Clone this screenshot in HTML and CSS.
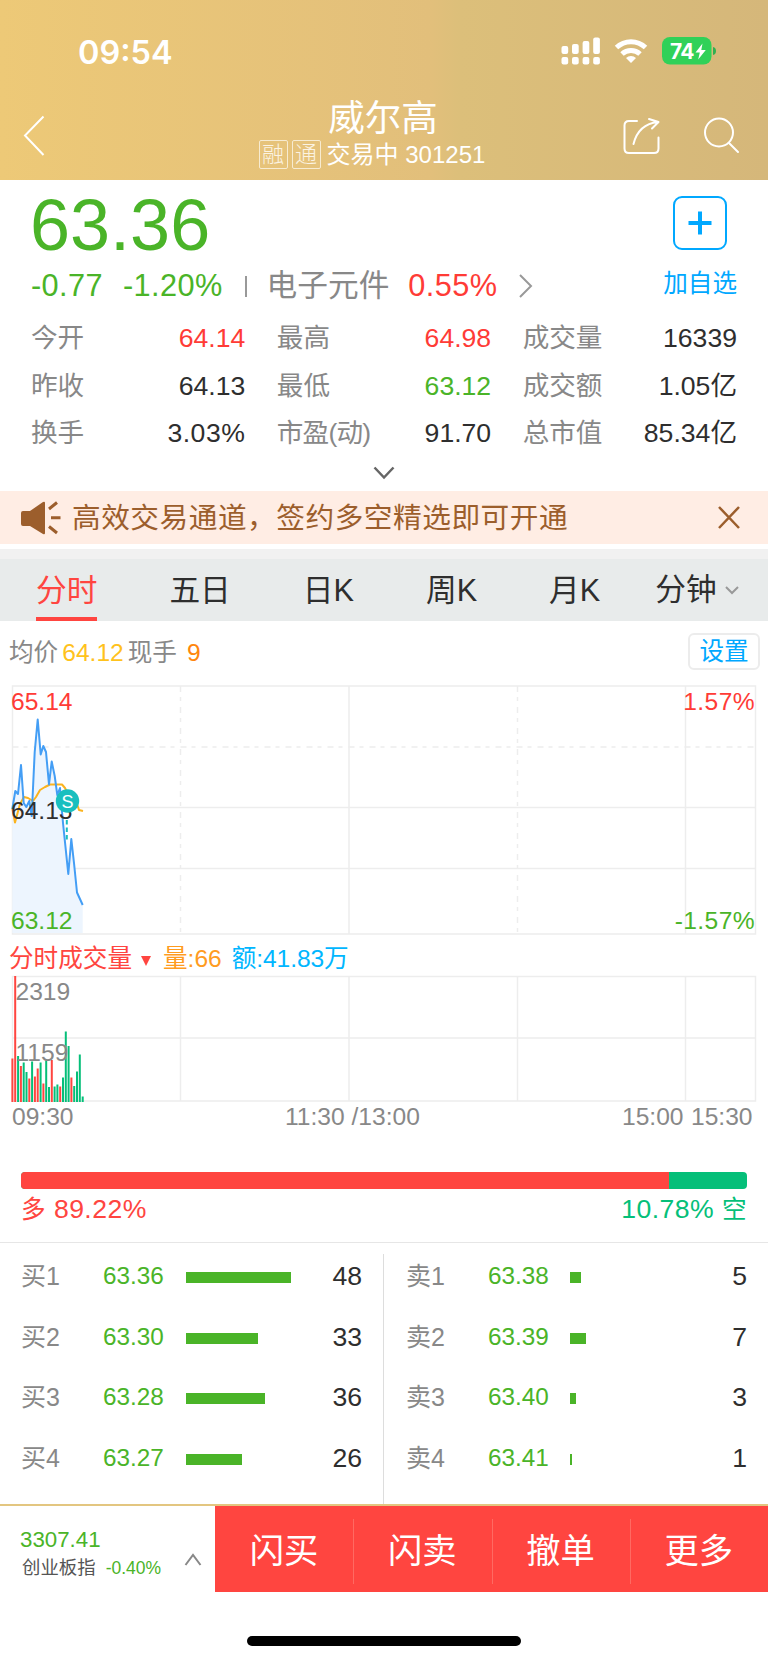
FILE: index.html
```html
<!DOCTYPE html>
<html lang="zh-CN">
<head>
    <meta charset="utf-8">
    <title>威尔高 301251</title>
    <link rel="stylesheet" href="styles.css">
</head>
<body>
    <header class="header">
        <div class="status">
            <span class="time">09:54</span>
            <svg class="status-icons" width="156" height="30" viewBox="561 36 156 30" fill="#fff">
                <rect x="561.5" y="46" width="6.7" height="8" rx="2"/>
                <rect x="572" y="44" width="6.7" height="10" rx="2"/>
                <rect x="582.6" y="41" width="6.7" height="13" rx="2"/>
                <rect x="593.2" y="37.5" width="6.7" height="16.5" rx="2"/>
                <rect x="561.5" y="57" width="6.7" height="7.5" rx="2"/>
                <rect x="572" y="57" width="6.7" height="7.5" rx="2"/>
                <rect x="582.6" y="57" width="6.7" height="7.5" rx="2"/>
                <rect x="593.2" y="57" width="6.7" height="7.5" rx="2"/>
                <g fill="none" stroke="#fff" stroke-width="5">
                    <path d="M616.5 47.5a21 21 0 0 1 29 0"/>
                    <path d="M622 54a13.2 13.2 0 0 1 18 0"/>
                </g>
                <path d="M631 63l-5-5a7.4 7.4 0 0 1 10 0z"/>
                <rect x="662" y="37" width="49.5" height="27.5" rx="8" fill="#30d158"/>
                <path d="M713 47q3 .5 3 4t-3 4z" fill="#30b050"/>
                <text class="battery" x="670" y="58.5">74</text>
                <path d="M702.5 43.5l-7 9h4.3l-1.6 7 7.6-9.4h-4.5z"/>
            </svg>
        </div>
        <div class="nav">
            <svg width="23" height="42" viewBox="23 115 23 42" fill="none" stroke="#fff" stroke-width="2"><path d="M43.5 116.5L25 135.5l18.5 19.5"/></svg>
            <div class="title">
                <h1>威尔高</h1>
                <p><i>融</i><i>通</i><span>交易中 301251</span></p>
            </div>
            <svg width="118" height="38" viewBox="622 117 118 38" fill="none" stroke="#fff" stroke-width="2" stroke-linecap="round" stroke-linejoin="round">
                <path d="M637 121h-8q-4.500 0-4.500 4.500v23q0 4.500 4.500 4.500h25q4.500 0 4.500-4.500v-11"/>
                <path d="M633.500 144q5-20 24.500-22M649 119l9.500 3-6.500 6.500"/>
                <circle cx="719" cy="132.500" r="14"/>
                <path d="M729 143l9 9"/>
            </svg>
        </div>
    </header>

    <section class="quote">
        <div class="price-row">
            <span class="price">63.36</span>
            <button class="add"><svg width="24" height="24" stroke="#00a8ff" stroke-width="4"><path d="M0.500 12h23M12 0.500v23"/></svg></button>
        </div>
        <div class="change">
            <span class="down">-0.77</span>
            <span class="down pct">-1.20%</span>
            <b></b>
            <span class="sector">电子元件</span>
            <span class="up">0.55%</span>
            <svg width="14" height="24" fill="none" stroke="#999" stroke-width="2"><path d="M1 1l11 11L1 23"/></svg>
            <a class="add-text">加自选</a>
        </div>
        <dl class="stats">
            <div><dt>今开</dt><dd class="up">64.14</dd></div>
            <div><dt>最高</dt><dd class="up">64.98</dd></div>
            <div><dt>成交量</dt><dd>16339</dd></div>
            <div><dt>昨收</dt><dd>64.13</dd></div>
            <div><dt>最低</dt><dd class="down">63.12</dd></div>
            <div><dt>成交额</dt><dd>1.05亿</dd></div>
            <div><dt>换手</dt><dd class="wide">3.03%</dd></div>
            <div><dt class="tight">市盈(动)</dt><dd>91.70</dd></div>
            <div><dt>总市值</dt><dd>85.34亿</dd></div>
        </dl>
        <svg class="expand" width="22" height="14" fill="none" stroke="#666" stroke-width="2.500"><path d="M1.500 1.500l9.500 10 9.500-10"/></svg>
    </section>

    <div class="notice">
        <svg width="40" height="34" viewBox="21 501 40 34" fill="#9c5e2c">
            <path d="M21 513q0-2 2-2h7l13-9q2-1 2 1v30q0 2-2 1l-13-8h-7q-2 0-2-2z"/>
            <path d="M49 509l8-6.500M51 517.700h9.500M49 526.500l8 6.500" stroke="#9c5e2c" stroke-width="3"/>
        </svg>
        <p>高效交易通道，签约多空精选即可开通</p>
        <svg width="22" height="23" stroke="#9c5e2c" stroke-width="2.500"><path d="M1 1l20 21M21 1L1 22"/></svg>
    </div>

    <nav class="tabs">
        <a class="active">分时</a>
        <a>五日</a>
        <a>日K</a>
        <a>周K</a>
        <a>月K</a>
        <a class="minute">分钟<svg width="14" height="9" fill="none" stroke="#999" stroke-width="2"><path d="M1 1l6 6 6-6"/></svg></a>
    </nav>

    <div class="info">
        <span>均价</span><span class="avg">64.12</span><span>现手</span><span class="hand">9</span>
        <button>设置</button>
    </div>

    <svg class="chart" width="768" height="252" viewBox="0 684 768 252">
        <g class="grid">
            <path d="M12.500 686H755.500V934H12.500zM12.500 807.500H755.500M12.500 868.500H755.500M349 686V934M685.500 686V934"/>
            <path d="M12.500 747H755.500M180.500 686V934M517.500 686V934" stroke-dasharray="6 5 4 6"/>
        </g>
        <path fill="#edf5fe" d="M12.300 809L15.300 791 18 794 21 765 23.700 803 26.300 807 29.300 801 31.700 816 34.700 752 37.700 719.500 40.700 754.500 43.300 746 46 752 49 784.500 51.700 761.500 54.700 776 57.300 795 60 788 63 823 68.300 874 71.300 839 74 863 77 892.500 82.700 905V933H12.300z"/>
        <path class="line avg-line" d="M12.300 808L15 822.500 20 804 24 797 28 798 33 801 36 797 40 790 45 787 50 784.500 62 784.500 65 788 70 798 76 801 79 810 83 811"/>
        <path class="line price-line" d="M12.300 809L15.300 791 18 794 21 765 23.700 803 26.300 807 29.300 801 31.700 816 34.700 752 37.700 719.500 40.700 754.500 43.300 746 46 752 49 784.500 51.700 761.500 54.700 776 57.300 795 60 788 63 823 68.300 874 71.300 839 74 863 77 892.500 82.700 905"/>
        <text x="11" y="709.500" class="t-up">65.14</text>
        <text x="11" y="819" class="t-dark">64.13</text>
        <text x="11" y="929" class="t-down">63.12</text>
        <text x="755" y="709.500" class="t-up end">1.57%</text>
        <text x="755" y="929" class="t-down end">-1.57%</text>
        <path d="M66.800 820v20" stroke="#19bfbf" stroke-width="2" stroke-dasharray="4.500 3"/>
        <circle cx="67.500" cy="801" r="11.700" fill="#19bfbf"/>
        <text x="67.500" y="807.500" class="mark">S</text>
    </svg>

    <div class="vol-head">
        <span class="name">分时成交量</span><span class="tri"></span><span class="vol">量:66</span><span class="amt">额:41.83万</span>
    </div>

    <svg class="chart" width="768" height="158" viewBox="0 975 768 158">
        <g class="grid">
            <path d="M12.500 976.500H755.500V1101H12.500zM12.500 1038H755.500M180.500 976.500V1101M349 976.500V1101M517.500 976.500V1101M685.500 976.500V1101"/>
        </g>
        <g class="bars-up">
            <path d="M12.400 1102V1058.500M15.200 1102V976M20.900 1102V1066M29.300 1102V1078.500M34.900 1102V1076.500M37.700 1102V1068.500M43.400 1102V1083.500M51.800 1102V1060M60.200 1102V1086.500M71.400 1102V1077.500"/>
        </g>
        <g class="bars-down">
            <path d="M18.100 1102V1056M23.700 1102V1062.500M26.500 1102V1072M32.100 1102V1061.500M40.600 1102V1062.500M46.200 1102V1060.500M49 1102V1087M54.600 1102V1086.500M57.400 1102V1084.500M63 1102V1077.500M65.800 1102V1031.500M68.600 1102V1046M74.200 1102V1086M77 1102V1071.500M79.800 1102V1054.500M82.700 1102V1096.500"/>
        </g>
        <g class="t-gray">
            <text x="15.500" y="1000">2319</text>
            <text x="15.500" y="1061">1159</text>
            <text x="12" y="1125">09:30</text>
            <text x="285" y="1125">11:30</text>
            <text x="351.500" y="1125">/13:00</text>
            <text x="622" y="1125">15:00</text>
            <text x="691" y="1125">15:30</text>
        </g>
    </svg>

    <section class="ratio">
        <div class="ratio-bar"><div style="width: 89.22%"></div></div>
        <div class="ratio-text"><span class="long"><em>多</em> 89.22%</span><span class="short">10.78% <em>空</em></span></div>
    </section>

    <section class="book">
        <ul>
            <li><span class="lv">买1</span><span class="p">63.36</span><span class="bar" style="width: 105px"></span><span class="n">48</span></li>
            <li><span class="lv">买2</span><span class="p">63.30</span><span class="bar" style="width: 72px"></span><span class="n">33</span></li>
            <li><span class="lv">买3</span><span class="p">63.28</span><span class="bar" style="width: 79px"></span><span class="n">36</span></li>
            <li><span class="lv">买4</span><span class="p">63.27</span><span class="bar" style="width: 56px"></span><span class="n">26</span></li>
        </ul>
        <ul>
            <li><span class="lv">卖1</span><span class="p">63.38</span><span class="bar" style="width: 11px"></span><span class="n">5</span></li>
            <li><span class="lv">卖2</span><span class="p">63.39</span><span class="bar" style="width: 16px"></span><span class="n">7</span></li>
            <li><span class="lv">卖3</span><span class="p">63.40</span><span class="bar" style="width: 6px"></span><span class="n">3</span></li>
            <li><span class="lv">卖4</span><span class="p">63.41</span><span class="bar" style="width: 2px"></span><span class="n">1</span></li>
        </ul>
    </section>

    <footer class="footer">
        <div class="index">
            <div>
                <div class="index-value">3307.41</div>
                <div class="index-name">创业板指 <span>-0.40%</span></div>
            </div>
            <svg width="18" height="13" fill="none" stroke="#888" stroke-width="2"><path d="M1.500 12L9 2l7.500 10"/></svg>
        </div>
        <a>闪买</a>
        <a>闪卖</a>
        <a>撤单</a>
        <a>更多</a>
    </footer>
    <div class="home"></div>
</body>
</html>
```
FILE: styles.css
```css
* {
    box-sizing: border-box;
    margin: 0;
    padding: 0;
}

body {
    width: 768px;
    height: 1663px;
    overflow: hidden;
    background: #fff;
    color: #2e2e2e;
    font-family: "Liberation Sans", "Noto Sans CJK SC", sans-serif;
    font-size: 24.6px;
}

svg {
    display: block;
    flex: none;
}

button {
    background: none;
    font: inherit;
}

.up { color: #ff3b36; }
.down { color: #4ab428; }

/* header */
.header {
    height: 180px;
    background: linear-gradient(90deg, #edc977, #e2bf7b 56%, #dcbf7a 60%, #d5b77a);
    color: #fff;
}

.status {
    display: flex;
    justify-content: space-between;
    height: 96px;
    padding: 36px 51px 0 78px;
}

.time {
    font: 600 32.5px/33px Inter, sans-serif;
}

.battery {
    font: 700 21px Inter, sans-serif;
    letter-spacing: -.8px;
}

.nav {
    display: grid;
    grid-template-columns: 118px 1fr 118px;
    height: 84px;
    padding: 0 28px 0 23px;
}

.nav > svg {
    margin-top: 19px;
}

.nav > svg:last-child {
    margin-top: 21px;
}

.title h1 {
    margin-top: 3px;
    padding-left: 3px;
    font-size: 36.5px;
    font-weight: 400;
    line-height: 40px;
    text-align: center;
}

.title p {
    display: flex;
    justify-content: center;
    padding-right: 19px;
    line-height: 31px;
    font-size: 24px;
    white-space: nowrap;
}

.title i {
    width: 29px;
    height: 29px;
    margin: 1px 4px 0 0;
    border: 1.5px solid #f7ebd0;
    border-radius: 2px;
    color: #fbf3e2;
    font-size: 22px;
    font-style: normal;
    font-weight: 300;
    line-height: 27px;
    text-align: center;
}

.title span {
    margin-left: 2px;
}

/* quote */
.quote {
    height: 311px;
    padding: 0 31px;
}

.price-row {
    display: flex;
    justify-content: space-between;
    height: 83px;
}

.price {
    margin-left: -1px;
    color: #4ab428;
    font-size: 72px;
    line-height: 91px;
}

.add {
    display: flex;
    align-items: center;
    justify-content: center;
    width: 54px;
    height: 54px;
    margin: 16px 10px 0 0;
    border: 2px solid #00a8ff;
    border-radius: 9px;
}

.change {
    display: flex;
    align-items: center;
    height: 46px;
    font-size: 30.7px;
    line-height: 46px;
}

.change .up,
.change .down {
    letter-spacing: .4px;
}

.change .pct {
    margin-left: 20px;
}

.change b {
    width: 2px;
    height: 21px;
    margin: 0 20px 0 22px;
    background: #999;
}

.sector {
    margin-right: 19px;
    color: #888;
}

.change svg {
    margin-left: 22px;
}

.add-text {
    margin-left: auto;
    margin-top: -5px;
    color: #00a8ff;
    font-size: 24.6px;
}

.stats {
    display: grid;
    grid-template-columns: repeat(3, 1fr);
    column-gap: 31.5px;
    margin-top: 6px;
    font-size: 26.6px;
    line-height: 47.7px;
}

.stats div {
    display: flex;
    justify-content: space-between;
}

.stats dt {
    color: #888;
}

.stats .tight {
    letter-spacing: -.8px;
}

.stats .wide {
    letter-spacing: .5px;
}

.expand {
    margin: 8px auto 0;
}

.notice {
    display: flex;
    align-items: center;
    height: 53px;
    padding: 0 28px 0 21px;
    background: #ffede4;
    color: #9c5e2c;
}

.notice p {
    flex: 1;
    margin-left: 11px;
    font-size: 28.7px;
    letter-spacing: .5px;
    line-height: 52px;
}

/* tabs */
.tabs {
    display: flex;
    gap: 72px;
    height: 72px;
    margin-top: 5px;
    padding: 0 29px 0 36px;
    border-top: 10px solid #f1f1f1;
    background: #e8ebeb;
    font-size: 30.7px;
    line-height: 64px;
}

.tabs a {
    flex: none;
    height: 62px;
}

.tabs .active {
    border-bottom: 4px solid #ff4540;
    color: #ff4540;
}

.tabs .minute {
    display: flex;
    align-items: center;
    gap: 8px;
    margin-left: -17px;
}

.info {
    display: flex;
    align-items: center;
    height: 63px;
    padding: 0 8px 0 9px;
    color: #888;
    line-height: 62px;
}

.info .avg {
    margin: 0 4px;
    color: #ffc21c;
}

.info .hand {
    margin-left: 10px;
    color: #ff860d;
}

.info button {
    width: 72px;
    height: 37px;
    margin: -2px 0 0 auto;
    border: 2px solid #ececec;
    border-radius: 6px;
    color: #00a8ff;
    line-height: 34px;
}

/* charts */
.chart text {
    font-size: 24.6px;
}

.grid path {
    fill: none;
    stroke: #ededed;
    stroke-width: 1.5;
}

.line {
    fill: none;
    stroke-width: 2;
    stroke-linejoin: round;
}

.price-line { stroke: #449ef5; }
.avg-line { stroke: #fbb31e; }
.t-up { fill: #ff3b36; }
.t-down { fill: #4ab428; }
.t-dark { fill: #2e2e2e; }
.t-gray { fill: #888; }

.end {
    letter-spacing: .4px;
    text-anchor: end;
}

.chart .mark {
    fill: #fff;
    font-size: 18px;
    text-anchor: middle;
}

.bars-up path {
    stroke: #ff4540;
    stroke-width: 2;
}

.bars-down path {
    stroke: #05bf79;
    stroke-width: 2;
}

.vol-head {
    display: flex;
    align-items: center;
    height: 39px;
    padding: 6px 9px 0;
    line-height: 33px;
}

.vol-head .name { color: #ff4540; }
.vol-head .vol { color: #ff9c1f; }

.vol-head .amt {
    margin-left: 10px;
    color: #00b6ff;
    letter-spacing: -.1px;
}

.tri {
    margin: 4px 12px 0 9px;
    border: 5px solid transparent;
    border-top: 10px solid #ff4540;
    border-bottom: 0;
}

/* long / short ratio */
.ratio {
    height: 110px;
    padding: 39px 21px 0;
    border-bottom: 1px solid #e6e6e6;
}

.ratio-bar {
    height: 17px;
    overflow: hidden;
    border-radius: 4px;
    background: #05bf79;
}

.ratio-bar div {
    height: 100%;
    background: #ff4540;
}

.ratio-text {
    display: flex;
    justify-content: space-between;
    font-size: 26.6px;
    letter-spacing: .45px;
    line-height: 41px;
}

.ratio-text em {
    font-size: 24.6px;
    font-style: normal;
}

.long { color: #ff4540; }
.short { color: #05bf79; }

/* order book */
.book {
    display: grid;
    grid-template-columns: 384px 384px;
    height: 261px;
    padding-top: 11px;
}

.book ul {
    list-style: none;
    margin-top: -8px;
    padding: 0 21px;
}

.book ul:first-child {
    background: linear-gradient(#ddd, #ddd) right 8px / 1px 100% no-repeat;
    padding-right: 22px;
}

.book ul:last-child {
    padding-left: 22px;
}

.book li {
    display: flex;
    align-items: center;
    height: 60.6px;
    line-height: 60px;
}

.lv {
    width: 82px;
    color: #888;
    font-size: 25px;
}

.p {
    width: 82px;
    color: #4ab428;
    font-size: 24.3px;
}

.book ul:first-child .p {
    width: 83px;
}

.bar {
    height: 11px;
    margin-top: 3px;
    background: #4ab428;
}

.n {
    margin-left: auto;
    font-size: 26.6px;
}

/* bottom bar */
.footer {
    display: flex;
    height: 88px;
    border-top: 2px solid #e3c680;
    background: #ff4540;
    color: #fff;
}

.footer a {
    flex: 1;
    font-size: 34.3px;
    line-height: 90px;
    text-align: center;
}

.footer a + a {
    background: linear-gradient(#ff6a62, #ff6a62) 0 13px / 1px 65px no-repeat;
}

.index {
    display: flex;
    align-items: center;
    justify-content: space-between;
    width: 215px;
    padding: 9px 13px 0 20px;
    background: #fff;
}

.index-value {
    color: #4ab428;
    font-size: 22.3px;
    line-height: 28px;
}

.index-name {
    padding-left: 2px;
    color: #555;
    font-size: 18.4px;
    line-height: 27px;
    white-space: nowrap;
}

.index-name span {
    margin-left: 5px;
    color: #4ab428;
    font-size: 17.5px;
}

.index svg {
    margin-top: 12px;
}

.home {
    width: 274px;
    height: 10px;
    margin: 44px auto 0;
    border-radius: 5px;
    background: #000;
}
```
